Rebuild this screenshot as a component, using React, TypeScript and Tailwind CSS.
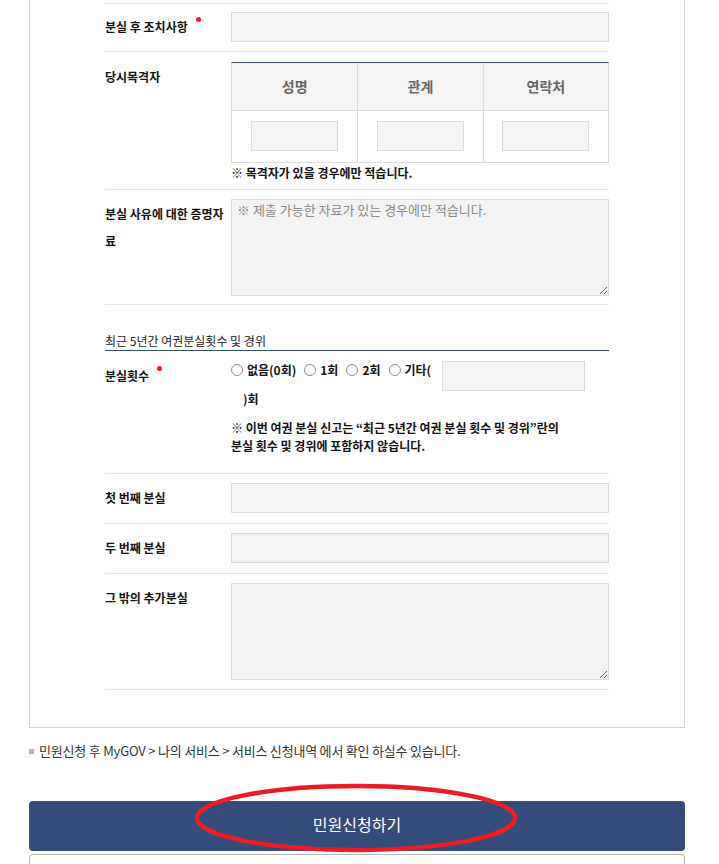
const font = { fontFamily: '"Noto Sans CJK KR", "Liberation Sans", sans-serif' };

const Dot = () => (
  <span className="absolute -right-[13px] -top-[1px] w-[5px] h-[5px] rounded-full bg-[#ff1a1a]"></span>
);

const Label = ({ children, dot }: { children: React.ReactNode; dot?: boolean }) => (
  <div className="w-[126px] shrink-0 pt-[1px] pr-[2px] text-[12px] leading-[27px] font-bold text-[#111]">
    <span className="relative">
      {children}
      {dot && <Dot />}
    </span>
  </div>
);

const Input = ({ className = "" }: { className?: string }) => (
  <div className={`h-[30px] bg-[#f4f4f4] border border-[#dcdcdc] ${className}`}></div>
);

const Area = ({ placeholder }: { placeholder?: string }) => (
  <textarea
    placeholder={placeholder}
    className="block w-full h-[97px] bg-[#f3f3f3] border border-[#dcdcdc] px-[5px] pt-[1px] text-[13px] leading-[18px] text-[#333] placeholder:text-[#8a8a8a] outline-none"
    style={font}
  />
);

const Radio = ({ label }: { label: string }) => (
  <span className="flex items-center mr-[8px]">
    <span className="w-[12px] h-[12px] rounded-full border border-[#8f8f8f] bg-white mr-[4px]"></span>
    <span className="text-[12px] font-bold text-[#111]">{label}</span>
  </span>
);

const App = () => {
  return (
    <div className="w-[719px] h-[864px] bg-white overflow-hidden relative" style={font}>
      <div className="ml-[29px] w-[656px] border-x border-b border-[#d6d6d6] pl-[75px] pr-[75px] pt-[3px] pb-[37px]">
        {/* 분실 후 조치사항 */}
        <div className="flex border-t border-b border-[#e8e8e8] pt-[8px] pb-[9px]">
          <Label dot>분실 후 조치사항</Label>
          <Input className="flex-1" />
        </div>

        {/* 당시목격자 */}
        <div className="flex border-b border-[#e8e8e8] pt-[10px] pb-[8px]">
          <Label>당시목격자</Label>
          <div className="flex-1">
            <div className="grid grid-cols-3 border-t border-t-[#3d5278] border-x border-b border-x-[#dcdcdc] border-b-[#dcdcdc]">
              {["성명", "관계", "연락처"].map((h, i) => (
                <div
                  key={h}
                  className={`h-[48px] bg-[#f4f4f4] border-b border-[#dcdcdc] flex items-center justify-center text-[14px] font-bold text-[#666] ${
                    i > 0 ? "border-l" : ""
                  }`}
                >
                  {h}
                </div>
              ))}
              {[0, 1, 2].map((i) => (
                <div
                  key={i}
                  className={`h-[51px] flex items-center justify-center pb-[1px] ${
                    i > 0 ? "border-l border-[#dcdcdc]" : ""
                  }`}
                >
                  <Input className="w-[87px]" />
                </div>
              ))}
            </div>
            <div className="text-[12px] leading-[17px] font-bold text-[#111] mt-[1px]">
              ※ 목격자가 있을 경우에만 적습니다.
            </div>
          </div>
        </div>

        {/* 증명자료 */}
        <div className="flex border-b border-[#e8e8e8] pt-[9px] pb-[8px]">
          <Label>분실 사유에 대한 증명자료</Label>
          <div className="flex-1">
            <Area placeholder="※ 제출 가능한 자료가 있는 경우에만 적습니다." />
          </div>
        </div>

        {/* 최근 5년간 */}
        <div className="mt-[28px] pb-[1px] border-b border-[#2e4a7e] text-[12px] leading-[16px] text-[#222]">
          최근 5년간 여권분실횟수 및 경위
        </div>

        <div className="flex border-b border-[#e8e8e8] pt-[10px] pb-[18px]">
          <Label dot>분실횟수</Label>
          <div className="flex-1">
            <div className="flex items-start">
              <div className="flex items-center h-[16px] mt-[1px]">
                <Radio label="없음(0회)" />
                <Radio label="1회" />
                <Radio label="2회" />
                <Radio label="기타(" />
              </div>
              <Input className="w-[143px] ml-[3px]" />
            </div>
            <div className="pl-[12px] text-[12px] leading-[16px] font-bold text-[#111]">)회</div>
            <div className="mt-[12px] text-[12px] leading-[18px] font-bold text-[#111]">
              ※ 이번 여권 분실 신고는 “최근 5년간 여권 분실 횟수 및 경위”란의
              <br />
              분실 횟수 및 경위에 포함하지 않습니다.
            </div>
          </div>
        </div>

        <div className="flex border-b border-[#e8e8e8] pt-[9px] pb-[10px]">
          <Label>첫 번째 분실</Label>
          <Input className="flex-1" />
        </div>

        <div className="flex border-b border-[#e8e8e8] pt-[9px] pb-[10px]">
          <Label>두 번째 분실</Label>
          <Input className="flex-1" />
        </div>

        <div className="flex border-b border-[#e8e8e8] pt-[9px] pb-[9px]">
          <Label>그 밖의 추가분실</Label>
          <div className="flex-1">
            <Area />
          </div>
        </div>
      </div>

      {/* note */}
      <div className="ml-[29px] w-[656px] mt-[14px] flex items-center text-[13px] leading-[18px] text-[#333] tracking-[-0.2px]">
        <span className="w-[5px] h-[5px] bg-[#b5b5b5] mr-[5px]"></span>
        민원신청 후 MyGOV &gt; 나의 서비스 &gt; 서비스 신청내역 에서 확인 하실수 있습니다.
      </div>

      {/* button */}
      <div className="ml-[29px] w-[656px] mt-[41px] relative">
        <button className="w-full h-[50px] rounded-[4px] bg-[#344c7a] text-white text-[16px] leading-[20px] pb-[4px]">
          민원신청하기
        </button>
        <svg
          className="absolute left-[164px] -top-[18px] pointer-events-none"
          width="326"
          height="72"
          viewBox="0 0 326 72"
        >
          <ellipse cx="163" cy="35" rx="159" ry="32" fill="none" stroke="#ec1c24" strokeWidth="4.5" />
        </svg>
      </div>

      <div className="ml-[29px] w-[656px] mt-[3px] h-[40px] border border-[#b5b5b5] rounded-t-[4px]"></div>
    </div>
  );
};

export default App;
